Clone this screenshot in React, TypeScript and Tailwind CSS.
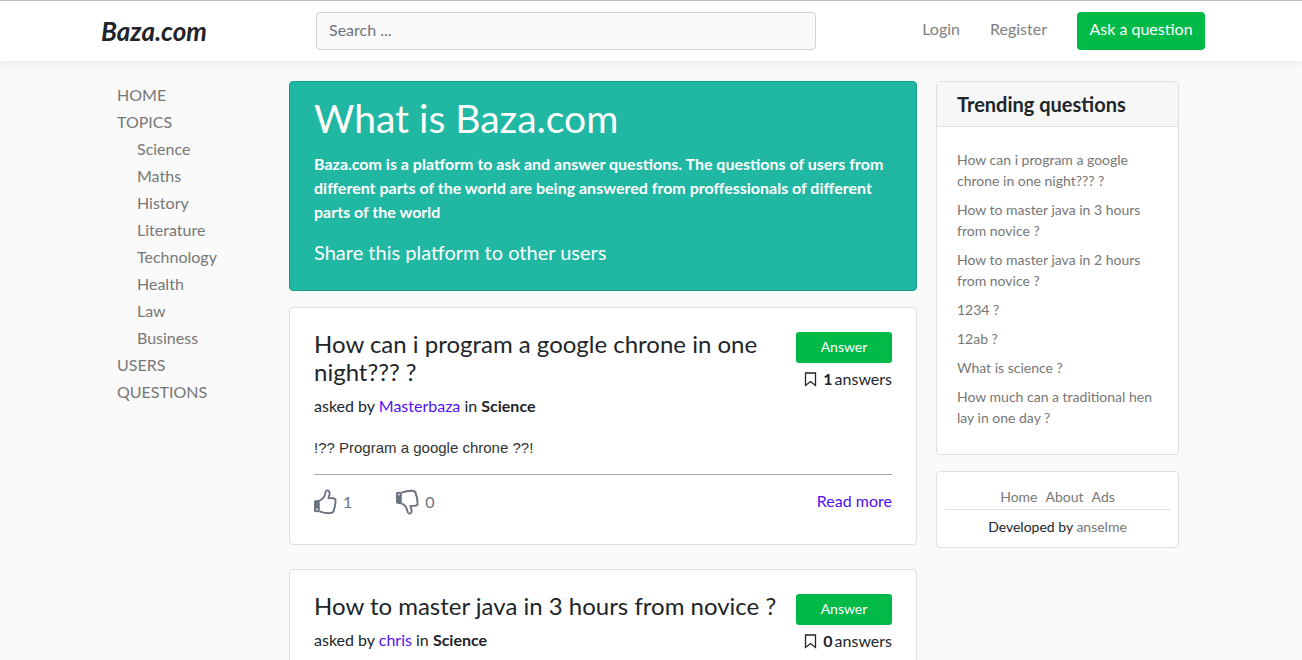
import React from "react";

const topics = ["Science", "Maths", "History", "Literature", "Technology", "Health", "Law", "Business"];

const trending = [
  "How can i program a google chrone in one night??? ?",
  "How to master java in 3 hours from novice ?",
  "How to master java in 2 hours from novice ?",
  "1234 ?",
  "12ab ?",
  "What is science ?",
  "How much can a traditional hen lay in one day ?",
];

interface Question {
  title: string;
  author: string;
  topic: string;
  body: string;
  answers: number;
  likes: number;
  dislikes: number;
}

const questions: Question[] = [
  {
    title: "How can i program a google chrone in one night??? ?",
    author: "Masterbaza",
    topic: "Science",
    body: "!?? Program a google chrone ??!",
    answers: 1,
    likes: 1,
    dislikes: 0,
  },
  {
    title: "How to master java in 3 hours from novice ?",
    author: "chris",
    topic: "Science",
    body: "",
    answers: 0,
    likes: 0,
    dislikes: 0,
  },
];

function Thumb({ down = false }: { down?: boolean }) {
  return (
    <svg width="23" height="26" viewBox="0 0 23 26" aria-hidden="true" className={down ? "-scale-y-100" : ""}>
      <path d="M0.5 12 5.2 11.2V22.6H1.1Q0.5 22.6 0.5 22Z" fill="#6b7280" stroke="#6b7280" />
      <circle cx="2.9" cy="20.4" r="0.9" fill="#fff" />
      <path
        d="M5.5 11.6C8.4 10.4 10.3 8 11.1 5.2 11.5 3.4 11.4 1.6 12.9 1.4 15.2 1.1 15.9 3.3 15.5 5.3L14.4 9.1 19.2 9.2C21.4 9.4 22 11.2 21.3 12.7 21.7 13.8 21.4 15 20.9 16 21.2 17.3 20.7 18.7 20.1 19.6 20.1 22.4 18.5 24.2 15.8 24.2 12 24.2 9 23.6 5.5 22.3"
        fill="none"
        stroke="#6b7280"
        strokeWidth="1.9"
        strokeLinejoin="round"
      />
    </svg>
  );
}

function QuestionCard({ question }: { question: Question }) {
  return (
    <article className="rounded border border-[#dfdfdf] bg-white px-6 pt-[22px] pb-6">
      <div className="flex items-start gap-3">
        <div className="min-w-0 flex-1">
          <h2 className="text-2xl leading-7">{question.title}</h2>
          <p className="mt-2 leading-6">
            asked by <a href="#" className="text-[#4f11f5]">{question.author}</a> in <b>{question.topic}</b>
          </p>
        </div>
        <div className="flex flex-col items-end gap-1 pt-0.5">
          <button className="h-[31px] w-24 rounded-[3px] bg-[#00ba47] pb-0.5 text-sm text-white">Answer</button>
          <p className="flex items-center leading-6">
            <svg width="13" height="15" viewBox="0 0 13 15" className="mr-1.5" aria-hidden="true">
              <path d="M1.5 1H11.5V13.5L6.5 9.5 1.5 13.5Z" fill="none" stroke="#212529" strokeWidth="1.3" />
            </svg>
            <b className="mr-0.5">{question.answers}</b> answers
          </p>
        </div>
      </div>
      <p className="mt-[18px] min-h-6 font-['Liberation_Sans',sans-serif] text-[15px] leading-6 text-[#333]">{question.body}</p>
      <div className="mt-3.5 flex items-start justify-between border-t border-[#a6a6a6] pt-3.5 pb-[5px]">
        <div className="flex gap-11 text-[#6b7280]">
          <button className="flex items-center gap-1.5" aria-label="Like">
            <Thumb /> {question.likes}
          </button>
          <button className="flex items-center gap-1.5" aria-label="Dislike">
            <Thumb down /> {question.dislikes}
          </button>
        </div>
        <a href="#" className="leading-6 text-[#4f11f5]">Read more</a>
      </div>
    </article>
  );
}

export default function App() {
  return (
    <div className="h-screen overflow-hidden bg-[#fafafa] font-['Lato',sans-serif] text-base text-[#212529]">
      <header className="border-t border-[#bebebe] bg-white shadow-[0_2px_12px_rgba(0,0,0,0.08)]">
        <div className="mx-auto flex h-[60px] max-w-[1108px] items-center pl-1">
          <a href="#" className="w-[215px] text-[26px] leading-8 font-bold italic">Baza.com</a>
          <input
            type="search"
            aria-label="Search"
            placeholder="Search ..."
            className="h-[38px] w-[500px] rounded border border-[#ced4da] bg-[#fafafa] px-3 pb-1 placeholder:text-[#6c757d]"
          />
          <nav className="ml-auto flex items-center gap-[30px] text-[#808080]">
            <a href="#" className="pb-1">Login</a>
            <a href="#" className="pb-1">Register</a>
            <button className="h-[38px] w-32 rounded bg-[#00ba47] pb-1 text-white">Ask a question</button>
          </nav>
        </div>
      </header>

      <div className="mx-auto flex max-w-[1068px] items-start pt-5 pr-1.5">
        <nav className="w-[172px] shrink-0 leading-[27px] text-[#777]">
          <a href="#" className="block">HOME</a>
          <a href="#" className="block">TOPICS</a>
          <ul className="pl-5">
            {topics.map((topic) => (
              <li key={topic}><a href="#">{topic}</a></li>
            ))}
          </ul>
          <a href="#" className="block">USERS</a>
          <a href="#" className="block">QUESTIONS</a>
        </nav>

        <main className="min-w-0 flex-1">
          <section className="mb-4 rounded border border-[#1a9e8a] bg-[#20b7a3] px-6 pt-3 pb-[26px] text-white">
            <h1 className="text-[39px] leading-[48px]">What is Baza.com</h1>
            <p className="mt-2.5 leading-6 font-bold">
              Baza.com is a platform to ask and answer questions. The questions of users from different parts of the
              world are being answered from proffessionals of different parts of the world
            </p>
            <p className="mt-4 text-xl leading-6">Share this platform to other users</p>
          </section>
          <div className="flex flex-col gap-6">
            {questions.map((question) => (
              <QuestionCard key={question.title} question={question} />
            ))}
          </div>
        </main>

        <aside className="ml-[19px] w-[243px] shrink-0">
          <section className="rounded border border-[#dfdfdf] bg-white">
            <h2 className="border-b border-[#dfdfdf] bg-[#f7f7f7] px-5 py-2.5 text-xl leading-6 font-bold">Trending questions</h2>
            <ul className="flex flex-col gap-2 px-5 pt-[22px] pb-[26px] text-sm leading-[21px] text-[#777]">
              {trending.map((title) => (
                <li key={title}><a href="#">{title}</a></li>
              ))}
            </ul>
          </section>
          <footer className="mt-4 rounded border border-[#dfdfdf] bg-white px-2 pt-3.5 pb-2.5 text-center text-sm leading-[21px]">
            <nav className="flex justify-center gap-2 border-b border-[#dfdfdf] pb-0.5 text-[#777]">
              <a href="#">Home</a>
              <a href="#">About</a>
              <a href="#">Ads</a>
            </nav>
            <p className="mt-1.5">Developed by <a href="#" className="text-[#777]">anselme</a></p>
          </footer>
        </aside>
      </div>
    </div>
  );
}
